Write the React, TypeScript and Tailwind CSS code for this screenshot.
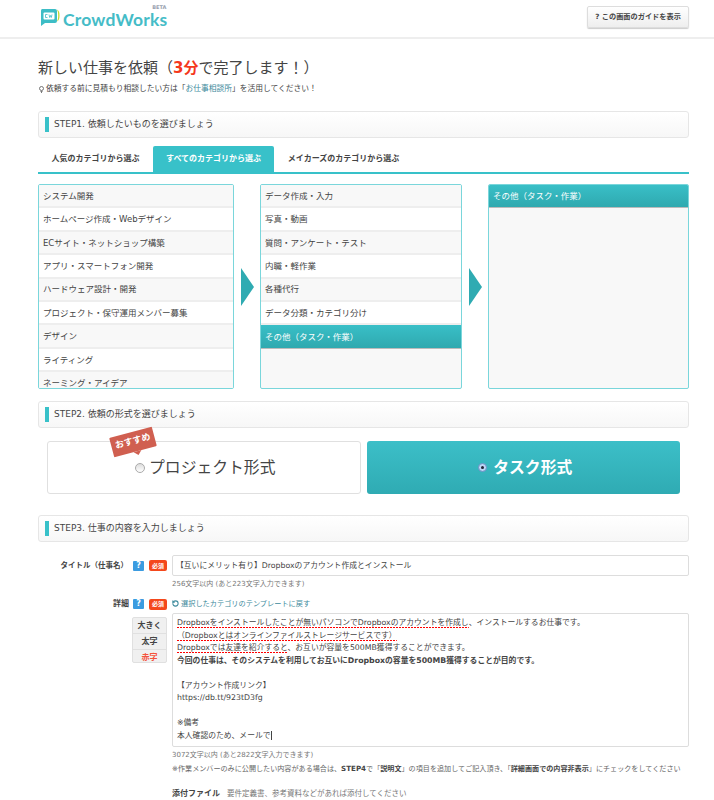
import { RotateCcw } from 'lucide-react';

const cats1 = [
  'システム開発',
  'ホームページ作成・Webデザイン',
  'ECサイト・ネットショップ構築',
  'アプリ・スマートフォン開発',
  'ハードウェア設計・開発',
  'プロジェクト・保守運用メンバー募集',
  'デザイン',
  'ライティング',
  'ネーミング・アイデア',
];

const cats2 = [
  'データ作成・入力',
  '写真・動画',
  '質問・アンケート・テスト',
  '内職・軽作業',
  '各種代行',
  'データ分類・カテゴリ分け',
];

function Logo() {
  return (
    <div className="relative mb-[2px] flex items-center gap-[3px]">
      <svg width="20" height="19" viewBox="0 0 20 19">
        <path d="M2 1h13a2 2 0 0 1 2 2v10a2 2 0 0 1-2 2H5l-4 3V3a2 2 0 0 1 1-2z" fill="#3dbdc6" />
        <path d="M17 1.500c2 1 2.500 3 2.500 6s-.5 5-2.500 6c1-2 1.200-4 1.200-6s-.2-4-1.200-6z" fill="#c4d92e" />
        <rect x="3.500" y="4.500" width="11" height="7" rx="1" fill="#fff" />
        <path d="M7.500 6.500H5.500v3h2M9 6.500l.7 3 .8-2 .8 2 .7-3" fill="none" stroke="#3dbdc6" strokeWidth="0.800" />
      </svg>
      <span className="mt-[3px] text-[17.500px] leading-[11px] font-bold tracking-[0.2px] text-[#45bcc7] font-['Lato','Liberation_Sans',sans-serif]">CrowdWorks</span>
      <span className="absolute right-[1px] -top-[3px] text-[5px] leading-[5px] font-bold text-gray-400">BETA</span>
    </div>
  );
}

function StepBar({ children }: { children: React.ReactNode }) {
  return (
    <div className="flex h-[27px] items-center gap-[5px] rounded-[3px] border border-[#e6e6e6] bg-gradient-to-b from-white to-[#f7f7f7] pl-[6px] text-[9px] text-[#444]">
      <span className="h-[15px] w-[4px] bg-[#38c1c9]" />
      {children}
    </div>
  );
}

function Row({ label, alt, active }: { label: string; alt?: boolean; active?: boolean }) {
  return (
    <div
      className={
        active
          ? 'flex h-[23.4px] shrink-0 items-center border-b border-[#bbb] bg-gradient-to-b from-[#39bfc7] to-[#2fa9af] px-[4px] pt-[1px] text-[8.500px] text-white'
          : `flex h-[23.4px] shrink-0 items-center border-b-2 border-[#eeeeee] px-[4px] pt-[1px] text-[8.500px] text-[#444] ${alt ? 'bg-[#f8f8f8]' : 'bg-white'}`
      }
    >
      {label}
    </div>
  );
}

function Arrow() {
  return (
    <div className="flex w-[26px] shrink-0 items-center justify-center">
      <div className="h-0 w-0 border-y-[19px] border-l-[13px] border-y-transparent border-l-[#2fabb2]" />
    </div>
  );
}

function HelpTags() {
  return (
    <div className="flex w-[39px] shrink-0 items-center gap-[5px]">
      <span className="flex h-[10px] w-[11px] items-center justify-center rounded-[1px] bg-[#3b9be0] text-[8px] leading-none font-bold text-white">?</span>
      <span className="flex h-[11px] w-[18px] items-center justify-center rounded-[2px] bg-[#f4481c] text-[6px] leading-none font-bold text-white">必須</span>
    </div>
  );
}

function Spell({ children }: { children: React.ReactNode }) {
  return (
    <span className="bg-[repeating-linear-gradient(90deg,#f00_0_2px,transparent_2px_3px)] bg-[length:100%_1px] bg-bottom bg-no-repeat pb-[1px]">
      {children}
    </span>
  );
}

export default function App() {
  return (
    <div className="h-[800px] overflow-hidden bg-white font-['DejaVu_Sans','Noto_Sans_CJK_JP',sans-serif] text-[#444]">
      <header className="flex h-[39px] items-center justify-between border-b-2 border-[#eeeeee] pr-[25px] pl-[40px]">
        <Logo />
        <button className="mb-[3px] h-[22px] w-[102px] rounded-[2px] border border-[#ddd] bg-gradient-to-b from-white to-[#eeeeee] text-[7.200px] font-bold text-[#444] shadow-[0_1px_1px_rgba(0,0,0,0.2)]">
          ? この画面のガイドを表示
        </button>
      </header>

      <main className="mr-[25px] ml-[38px] flex flex-col">
        <h1 className="mt-[19px] text-[15px] leading-[20px] font-normal text-[#444]">
          新しい仕事を依頼（<span className="font-bold text-[#f5381c]">3分</span>で完了します！）
        </h1>
        <p className="mt-[5px] flex items-center gap-[2px] pl-[1px] text-[7.750px] leading-[12px] text-[#444]">
          <svg width="5" height="7" viewBox="0 0 5 7" fill="none" stroke="#555" strokeWidth="0.800">
            <circle cx="2.500" cy="2.500" r="2" />
            <path d="M1.500 5.500h2M2 6.500h1" />
          </svg>
          <span>依頼する前に見積もり相談したい方は「<span className="text-[#3d8a9c]">お仕事相談所</span>」を活用してください！</span>
        </p>

        <div className="mt-[16px]">
          <StepBar>STEP1. 依頼したいものを選びましょう</StepBar>
        </div>

        <nav className="mt-[8px] flex h-[28px] border-b-2 border-[#38c1c9] text-[8px] font-bold text-[#444]">
          <div className="flex w-[115px] items-center justify-center">人気のカテゴリから選ぶ</div>
          <div className="flex w-[121px] items-center justify-center rounded-t-[2px] bg-[#38c1c9] text-white">すべてのカテゴリから選ぶ</div>
          <div className="flex w-[139px] items-center justify-center">メイカーズのカテゴリから選ぶ</div>
        </nav>

        <div className="mt-[10px] flex h-[205px]">
          <div className="flex w-[196px] shrink-0 flex-col overflow-hidden rounded-[2px] border border-[#7ad6db]">
            {cats1.map((c, i) => (
              <Row key={c} label={c} alt={i % 2 === 0} />
            ))}
          </div>
          <Arrow />
          <div className="flex w-[202px] shrink-0 flex-col overflow-hidden rounded-[2px] border border-[#7ad6db] bg-[#f8f8f8]">
            {cats2.map((c, i) => (
              <Row key={c} label={c} alt={i % 2 === 0} />
            ))}
            <Row label="その他（タスク・作業）" active />
          </div>
          <Arrow />
          <div className="flex min-w-0 flex-1 flex-col overflow-hidden rounded-[2px] border border-[#7ad6db] bg-[#f8f8f8]">
            <Row label="その他（タスク・作業）" active />
          </div>
        </div>

        <div className="mt-[12px]">
          <StepBar>STEP2. 依頼の形式を選びましょう</StepBar>
        </div>

        <div className="mt-[13px] flex gap-[6px] px-[9px]">
          <div className="relative flex h-[53px] w-[314px] items-center justify-center gap-[4px] rounded-[3px] border border-[#e0e0e0] bg-white pl-[3px] text-[15.800px] text-[#444]">
            <span className="h-[10px] w-[10px] rounded-full border border-[#aaa] bg-gradient-to-b from-[#ddd] to-white" />
            プロジェクト形式
            <div className="absolute top-[-10px] left-[63px] flex h-[20px] w-[44px] -rotate-[15deg] items-center justify-center rounded-[1px] bg-[#d05f50] text-[9px] font-bold text-white">
              おすすめ
              <span className="absolute bottom-[-4px] left-[20px] h-0 w-0 border-x-[4px] border-t-[4px] border-x-transparent border-t-[#d05f50]" />
            </div>
          </div>
          <div className="flex h-[53px] w-[314px] items-center justify-center gap-[6px] rounded-[3px] bg-gradient-to-b from-[#3cbfc8] to-[#2fabb3] pl-[4px] text-[15.800px] font-bold text-white">
            <span className="flex h-[9px] w-[9px] items-center justify-center rounded-full border border-[#6b8fc4] bg-[#bcd6f5]">
              <span className="h-[3px] w-[3px] rounded-full bg-[#223]" />
            </span>
            タスク形式
          </div>
        </div>

        <div className="mt-[21px]">
          <StepBar>STEP3. 仕事の内容を入力しましょう</StepBar>
        </div>

        <div className="mt-[13px] flex">
          <div className="flex w-[134px] shrink-0 items-center justify-end gap-[5px]">
            <span className="text-[7.500px] font-bold text-[#444]">タイトル（仕事名）</span>
            <HelpTags />
          </div>
          <div className="flex h-[21px] flex-1 items-center rounded-[2px] border border-[#ddd] pl-[3px] text-[7.800px] text-[#444]">
            【互いにメリット有り】Dropboxのアカウント作成とインストール
          </div>
        </div>
        <p className="mt-[2px] ml-[134px] text-[7px] leading-[12px] text-[#777]">256文字以内 (あと223文字入力できます)</p>

        <div className="mt-[8px] flex h-[12px] items-center">
          <div className="flex w-[134px] shrink-0 items-center justify-end gap-[4px]">
            <span className="text-[8px] font-bold text-[#444]">詳細</span>
            <HelpTags />
          </div>
          <span className="flex items-center gap-[2px] text-[7.200px] text-[#3d8a9c]">
            <RotateCcw size={7} strokeWidth={3.500} />
            選択したカテゴリのテンプレートに戻す
          </span>
        </div>

        <div className="mt-[3px] flex">
          <div className="flex w-[134px] shrink-0 justify-end pt-[4px] pr-[5px]">
            <div className="flex h-[46px] w-[35px] flex-col rounded-[2px] border border-[#e0e0e0] bg-[#f0f0f0] text-center text-[8px] leading-[15px] font-bold">
              <span className="border-b border-[#e0e0e0] text-[#444]">大きく</span>
              <span className="border-b border-[#e0e0e0] text-[#444]">太字</span>
              <span className="text-[#f5533c]">赤字</span>
            </div>
          </div>
          <div className="h-[134px] flex-1 rounded-[2px] border border-[#ddd] px-[4px] py-[3px] text-[7.800px] leading-[12.500px] text-[#444]">
            <div><Spell>Dropboxをインストールしたことが無いパソコンでDropboxのアカウントを作成し</Spell>、インストールするお仕事です。</div>
            <div><Spell>（Dropboxとはオンラインファイルストレージサービスです）</Spell></div>
            <div><Spell>Dropboxでは友達を紹介すると</Spell>、お互いが容量を500MB獲得することができます。</div>
            <div className="font-bold">今回の仕事は、そのシステムを利用してお互いにDropboxの容量を500MB獲得することが目的です。</div>
            <div className="h-[12.500px]" />
            <div>【アカウント作成リンク】</div>
            <div>https://db.tt/923tD3fg</div>
            <div className="h-[12.500px]" />
            <div>※備考</div>
            <div>本人確認のため、メールで<span className="border-r border-[#444]" /></div>
          </div>
        </div>

        <p className="mt-[2px] ml-[134px] text-[7px] leading-[12px] text-[#777]">3072文字以内 (あと2822文字入力できます)</p>
        <p className="mt-[2px] ml-[134px] text-[7.100px] leading-[12px] whitespace-nowrap text-[#666]">
          ※作業メンバーのみに公開したい内容がある場合は、<b className="text-[#444]">STEP4</b>で「<b className="text-[#444]">説明文</b>」の項目を追加してご記入頂き、「<b className="text-[#444]">詳細画面での内容非表示</b>」にチェックをしてください
        </p>
        <p className="mt-[13px] ml-[134px] text-[7.500px] leading-[12px] text-[#777]">
          <b className="mr-[7px] text-[8px] text-[#444]">添付ファイル</b>要件定義書、参考資料などがあれば添付してください
        </p>
      </main>
    </div>
  );
}
